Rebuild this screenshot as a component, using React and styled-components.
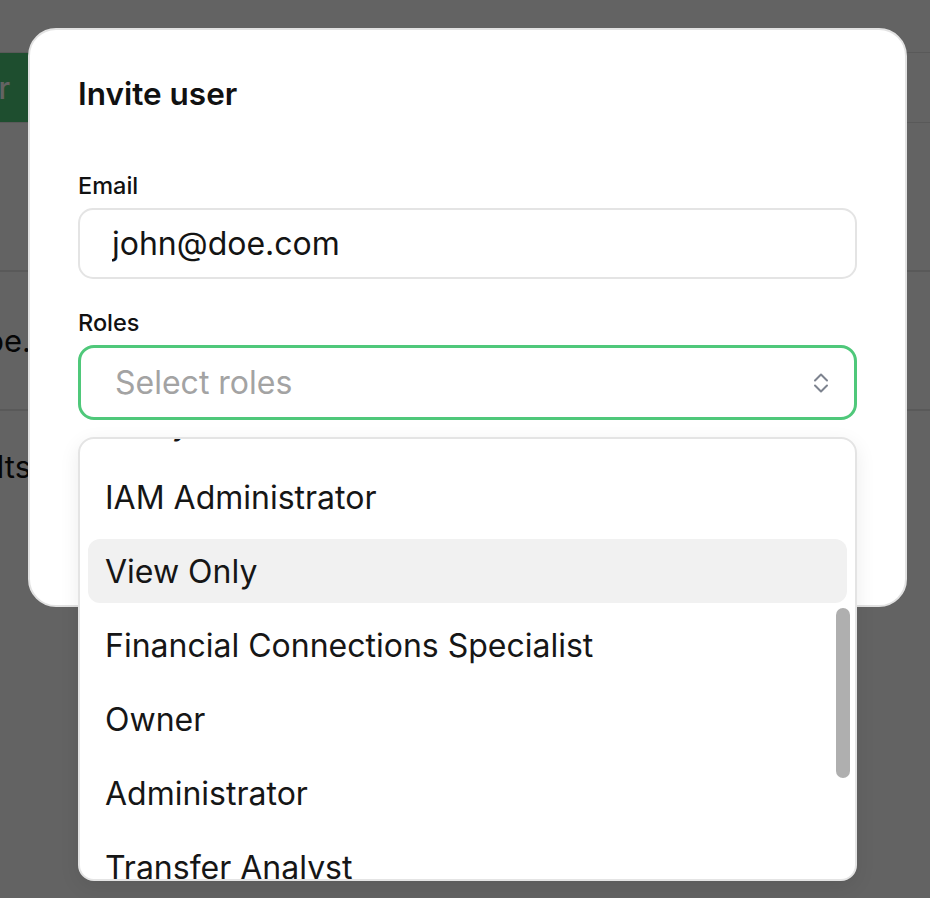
import React from "react";
import styled, { createGlobalStyle } from "styled-components";

const GlobalStyle = createGlobalStyle`
  html, body {
    margin: 0;
    padding: 0;
    background: #ffffff;
  }
  * {
    box-sizing: border-box;
  }
`;

const roles = [
  "Super Administrator",
  "Developer",
  "Support Specialist",
  "Dispute Analyst",
  "Analyst",
  "IAM Administrator",
  "View Only",
  "Financial Connections Specialist",
  "Owner",
  "Administrator",
  "Transfer Analyst",
  "Tax Analyst",
  "Sandbox Administrator",
  "Sandbox User",
  "Identity Specialist",
];

function ChevronsUpDown() {
  return (
    <svg width="18" height="24" viewBox="0 0 18 24" fill="none">
      <path d="M3 9.5 L9 3.5 L15 9.5" stroke="#7d838f" strokeWidth="2" strokeLinecap="round" strokeLinejoin="round" />
      <path d="M3 14.5 L9 20.5 L15 14.5" stroke="#7d838f" strokeWidth="2" strokeLinecap="round" strokeLinejoin="round" />
    </svg>
  );
}

function App() {
  return (
    <Screen>
      <GlobalStyle />
      <Backdrop>
        <Toolbar>
          <Clip $w={30}>
            <GreenButton>Invite user</GreenButton>
          </Clip>
        </Toolbar>
        <Section $h={149} />
        <Section $h={139}>
          <Clip $w={31}>
            <BgText>Search by role type.</BgText>
          </Clip>
        </Section>
        <Section $h={110} $last>
          <Clip $w={31}>
            <BgText>No results</BgText>
          </Clip>
        </Section>
      </Backdrop>

      <Overlay>
        <Dialog>
          <Title>Invite user</Title>
          <Field>
            <Label>Email</Label>
            <TextInput defaultValue="john@doe.com" />
          </Field>
          <Field>
            <Label>Roles</Label>
            <SelectWrap>
              <SelectBox>
                <Placeholder>Select roles</Placeholder>
                <ChevronsUpDown />
              </SelectBox>
              <Popover>
                <Options $offset={352}>
                  {roles.map((r) => (
                    <Option key={r} $active={r === "View Only"}>
                      {r}
                    </Option>
                  ))}
                </Options>
                <Thumb />
              </Popover>
            </SelectWrap>
          </Field>
        </Dialog>
      </Overlay>
    </Screen>
  );
}

export default App;

const Screen = styled.div`
  position: relative;
  width: 930px;
  height: 898px;
  overflow: hidden;
  font-family: Inter, "Noto Sans", sans-serif;
  color: #141414;
`;

const Backdrop = styled.div`
  padding-top: 52px;
  display: flex;
  flex-direction: column;
`;

const Toolbar = styled.div`
  height: 71px;
  display: flex;
  align-items: stretch;
  border-top: 1px solid #e6e6e6;
  border-bottom: 1px solid #e6e6e6;
`;

const Section = styled.div`
  height: ${(p) => p.$h}px;
  display: flex;
  align-items: center;
  border-bottom: ${(p) => (p.$last ? "none" : "2px solid #e6e6e6")};
`;

const Clip = styled.div`
  width: ${(p) => p.$w}px;
  display: flex;
  justify-content: flex-end;
  overflow: hidden;
  white-space: nowrap;
`;

const GreenButton = styled.div`
  background: #4fc87a;
  color: #ffffff;
  font-size: 30px;
  font-weight: 500;
  display: flex;
  align-items: center;
  padding: 0 20px 0 24px;
  margin-top: -1px;
  height: 71px;
`;

const BgText = styled.span`
  font-size: 31px;
  color: #111;
`;

const Overlay = styled.div`
  position: absolute;
  inset: 0;
  background: rgba(0, 0, 0, 0.61);
  padding: 28px;
`;

const Dialog = styled.div`
  width: 879px;
  height: 579px;
  background: #ffffff;
  border: 2px solid #e2e2e2;
  border-radius: 28px;
  padding: 46px 48px 0;
  display: flex;
  flex-direction: column;
  gap: 29px;
`;

const Title = styled.h2`
  margin: 0 0 30px;
  font-size: 31.5px;
  line-height: 36px;
  font-weight: 600;
  color: #111;
`;

const Field = styled.div`
  display: flex;
  flex-direction: column;
  gap: 7px;
`;

const Label = styled.label`
  font-size: 23.5px;
  line-height: 30px;
  font-weight: 500;
  color: #111;
`;

const TextInput = styled.input`
  height: 71px;
  border: 2px solid #e4e4e4;
  border-radius: 15px;
  padding: 0 32px;
  font-family: Inter, "Noto Sans", sans-serif;
  font-size: 32px;
  color: #141414;
  outline: none;
  background: #fff;
`;

const SelectWrap = styled.div`
  position: relative;
`;

const SelectBox = styled.div`
  height: 75px;
  border: 3px solid #4fc87a;
  border-radius: 16px;
  padding: 0 24px 0 34px;
  display: flex;
  align-items: center;
  justify-content: space-between;
`;

const Placeholder = styled.span`
  font-size: 32px;
  color: #a3a3a3;
`;

const Popover = styled.div`
  position: absolute;
  top: calc(100% + 17px);
  left: 0;
  right: 0;
  height: 444px;
  background: #ffffff;
  border: 2px solid #e4e4e4;
  border-radius: 16px;
  box-shadow: 0 6px 20px rgba(0, 0, 0, 0.08);
  overflow: hidden;
  z-index: 2;
`;

const Options = styled.div`
  display: flex;
  flex-direction: column;
  gap: 10px;
  padding: 8px 8px;
  margin-top: -${(p) => p.$offset}px;
`;

const Option = styled.div`
  height: 64px;
  flex-shrink: 0;
  display: flex;
  align-items: center;
  padding-left: 17px;
  border-radius: 12px;
  font-size: 32px;
  color: #161616;
  background: ${(p) => (p.$active ? "#f1f1f1" : "transparent")};
`;

const Thumb = styled.div`
  position: absolute;
  right: 5px;
  top: 169px;
  width: 14px;
  height: 170px;
  border-radius: 7px;
  background: #afafaf;
`;
